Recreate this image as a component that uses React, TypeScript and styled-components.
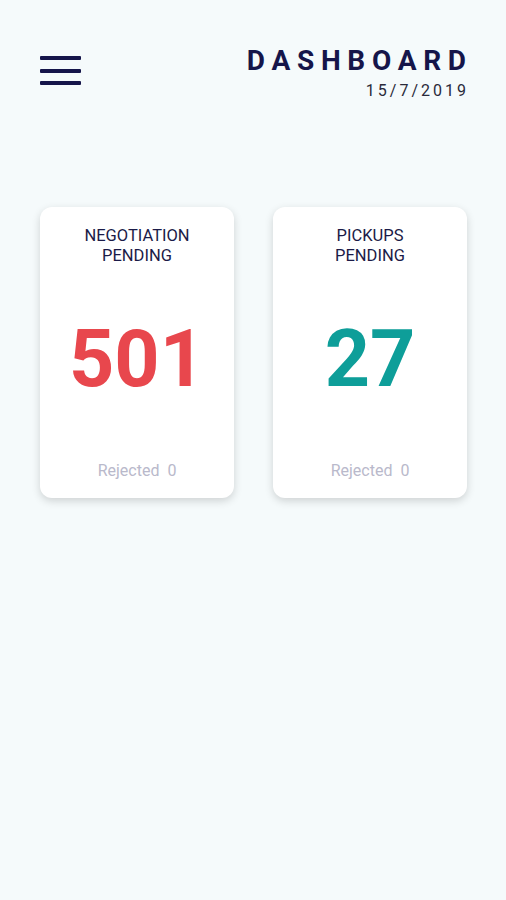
import * as React from 'react';
import styled, { createGlobalStyle } from 'styled-components';

const GlobalStyle = createGlobalStyle`
    html, body {
        margin: 0;
        padding: 0;
        background: #f5fafb;
        font-family: Roboto, "Liberation Sans", sans-serif;
    }
`;

const Page = styled.div`
    min-height: 900px;
    background: #f5fafb;
    padding: 46px 40px 0 40px;
    box-sizing: border-box;
`;

const Header = styled.div`
    display: flex;
    justify-content: space-between;
    align-items: flex-start;
`;

const MenuButton = styled.div`
    display: flex;
    flex-direction: column;
    gap: 8.5px;
    width: 41px;
    padding-top: 10px;
`;

const MenuLine = styled.span`
    display: block;
    height: 4px;
    background: #15154a;
    border-radius: 1px;
`;

const TitleBlock = styled.div`
    display: flex;
    flex-direction: column;
    align-items: flex-end;
`;

const Title = styled.h1`
    margin: 0;
    font-size: 28px;
    line-height: 30px;
    font-weight: 700;
    letter-spacing: 6.7px;
    margin-right: -6.7px;
    color: #15154a;
`;

const DateText = styled.div`
    margin-top: 5px;
    font-size: 16px;
    line-height: 20px;
    letter-spacing: 3px;
    margin-right: -3px;
    color: #2a2a3a;
`;

const Cards = styled.div`
    display: grid;
    grid-template-columns: 194px 194px;
    gap: 39px;
    margin-top: 106px;
`;

const Card = styled.div`
    height: 291px;
    background: #ffffff;
    border-radius: 12px;
    box-shadow: 0 3px 8px rgba(0, 0, 0, 0.16);
    display: flex;
    flex-direction: column;
    align-items: center;
    padding: 19px 10px 17px;
    box-sizing: border-box;
`;

const CardTitle = styled.div`
    font-size: 16.5px;
    line-height: 20px;
    text-align: center;
    color: #1b1b48;
`;

const Count = styled.div<{ color: string }>`
    flex: 1;
    display: flex;
    align-items: center;
    font-size: 79px;
    font-weight: 700;
    color: ${p => p.color};
    padding-bottom: 10px;
`;

const Rejected = styled.div`
    font-size: 16px;
    line-height: 20px;
    color: #b9b9cb;
    word-spacing: 4px;
`;

const items = [
    { title: ['NEGOTIATION', 'PENDING'], count: 501, color: '#e8474d', rejected: 0 },
    { title: ['PICKUPS', 'PENDING'], count: 27, color: '#0e9e99', rejected: 0 }
];

export default function App() {
    return (
        <Page>
            <GlobalStyle />
            <Header>
                <MenuButton>
                    <MenuLine />
                    <MenuLine />
                    <MenuLine />
                </MenuButton>
                <TitleBlock>
                    <Title>DASHBOARD</Title>
                    <DateText>15/7/2019</DateText>
                </TitleBlock>
            </Header>
            <Cards>
                {items.map((item, index) => (
                    <Card key={index}>
                        <CardTitle>
                            {item.title[0]}
                            <br />
                            {item.title[1]}
                        </CardTitle>
                        <Count color={item.color}>{item.count}</Count>
                        <Rejected>Rejected {item.rejected}</Rejected>
                    </Card>
                ))}
            </Cards>
        </Page>
    );
}
